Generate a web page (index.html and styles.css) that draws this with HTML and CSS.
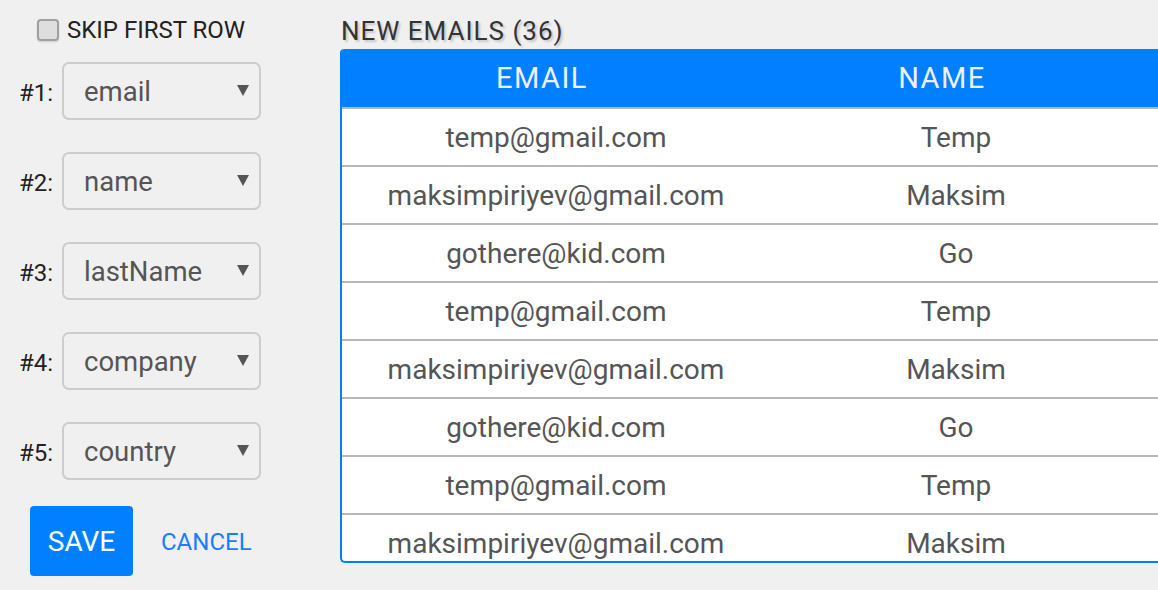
FILE: index.html
```html
<!DOCTYPE html>
<html>
<head>
<meta charset="utf-8">
<link rel="stylesheet" href="styles.css">
</head>
<body>
<div class="app">
  <aside class="sidebar">
    <label class="skip"><span class="checkbox"></span><span class="skip-text">SKIP FIRST ROW</span></label>
    <div class="fields">
      <div class="field"><span class="field-label">#1:</span><div class="select"><span class="select-value">email</span><span class="select-arrow"></span></div></div>
      <div class="field"><span class="field-label">#2:</span><div class="select"><span class="select-value">name</span><span class="select-arrow"></span></div></div>
      <div class="field"><span class="field-label">#3:</span><div class="select"><span class="select-value">lastName</span><span class="select-arrow"></span></div></div>
      <div class="field"><span class="field-label">#4:</span><div class="select"><span class="select-value">company</span><span class="select-arrow"></span></div></div>
      <div class="field"><span class="field-label">#5:</span><div class="select"><span class="select-value">country</span><span class="select-arrow"></span></div></div>
    </div>
    <div class="actions">
      <button class="btn-save">SAVE</button>
      <button class="btn-cancel">CANCEL</button>
    </div>
  </aside>
  <main class="main">
    <h1 class="title">NEW EMAILS (36)</h1>
    <div class="table">
      <div class="thead">
        <div class="th">EMAIL</div>
        <div class="th">NAME</div>
      </div>
      <div class="tbody">
        <div class="tr"><div class="td">temp@gmail.com</div><div class="td">Temp</div></div>
        <div class="tr"><div class="td">maksimpiriyev@gmail.com</div><div class="td">Maksim</div></div>
        <div class="tr"><div class="td">gothere@kid.com</div><div class="td">Go</div></div>
        <div class="tr"><div class="td">temp@gmail.com</div><div class="td">Temp</div></div>
        <div class="tr"><div class="td">maksimpiriyev@gmail.com</div><div class="td">Maksim</div></div>
        <div class="tr"><div class="td">gothere@kid.com</div><div class="td">Go</div></div>
        <div class="tr"><div class="td">temp@gmail.com</div><div class="td">Temp</div></div>
        <div class="tr"><div class="td">maksimpiriyev@gmail.com</div><div class="td">Maksim</div></div>
      </div>
    </div>
  </main>
</div>
</body>
</html>
```
FILE: styles.css
```css
html, body {
  margin: 0;
  padding: 0;
  background: #f0f0f0;
  overflow: hidden;
}
body {
  font-family: Roboto, "Noto Sans", sans-serif;
  width: 1158px;
  height: 590px;
}
.app {
  display: flex;
  height: 590px;
}
.sidebar {
  width: 340px;
  flex: none;
  box-sizing: border-box;
  padding: 17px 0 0 19px;
  display: flex;
  flex-direction: column;
}
.skip {
  display: flex;
  align-items: center;
  gap: 8px;
  margin-left: 18px;
  height: 26px;
}
.checkbox {
  width: 22px;
  height: 22px;
  box-sizing: border-box;
  border: 2px solid #a0a0a0;
  border-radius: 4px;
  background: #dedede;
  box-shadow: 0 1px 2px rgba(0,0,0,0.15);
}
.skip-text {
  font-size: 24px;
  color: #222;
  line-height: 26px;
}
.fields {
  margin-top: 19px;
  display: flex;
  flex-direction: column;
  gap: 32px;
}
.field {
  display: flex;
  align-items: center;
  gap: 10px;
}
.field-label {
  width: 33px;
  font-size: 24px;
  color: #222;
  padding-top: 4px;
}
.select {
  width: 199px;
  height: 58px;
  box-sizing: border-box;
  border: 2px solid #cdcdcd;
  border-radius: 7px;
  display: flex;
  align-items: center;
  justify-content: space-between;
  padding: 0 10px 0 20px;
}
.select-value {
  font-size: 27.5px;
  color: #555;
}
.select-arrow {
  width: 0;
  height: 0;
  border-left: 6px solid transparent;
  border-right: 6px solid transparent;
  border-top: 11px solid #555;
  margin-top: -1px;
}
.actions {
  margin-top: 26px;
  margin-left: 11px;
  display: flex;
  align-items: center;
  gap: 28px;
}
.btn-save {
  width: 103px;
  height: 70px;
  border: none;
  border-radius: 4px;
  background: #0080ff;
  color: #fff;
  font-family: Roboto, sans-serif;
  font-size: 28px;
  padding: 0;
}
.btn-cancel {
  border: none;
  background: none;
  padding: 0;
  color: #1a7cff;
  font-family: Roboto, sans-serif;
  font-size: 24px;
  margin-top: 2px;
}
.main {
  flex: none;
  padding-top: 13px;
}
.title {
  margin: 0 0 0 1px;
  font-weight: normal;
  font-size: 26px;
  letter-spacing: 1px;
  line-height: 36px;
  height: 36px;
  color: #333;
  text-shadow: 2px 2px 2px #c8c8c8;
}
.table {
  width: 830px;
  height: 514px;
  box-sizing: border-box;
  border-left: 2px solid #0080ff;
  border-bottom: 2px solid #0080ff;
  border-radius: 4px 0 0 5px;
  overflow: hidden;
  background: #fff;
}
.thead {
  display: flex;
  height: 58px;
  background: #0080ff;
  margin-left: -2px;
  padding-left: 2px;
}
.th {
  width: 400px;
  text-align: center;
  line-height: 58px;
  font-size: 29px;
  letter-spacing: 1.5px;
  color: #eef0ff;
}
.tr {
  display: flex;
  border-top: 2px solid #b8b8b8;
  height: 56px;
}
.td {
  width: 400px;
  box-sizing: border-box;
  padding-left: 28px;
  text-align: center;
  line-height: 58px;
  font-size: 28px;
  color: #555;
  white-space: nowrap;
}
```
